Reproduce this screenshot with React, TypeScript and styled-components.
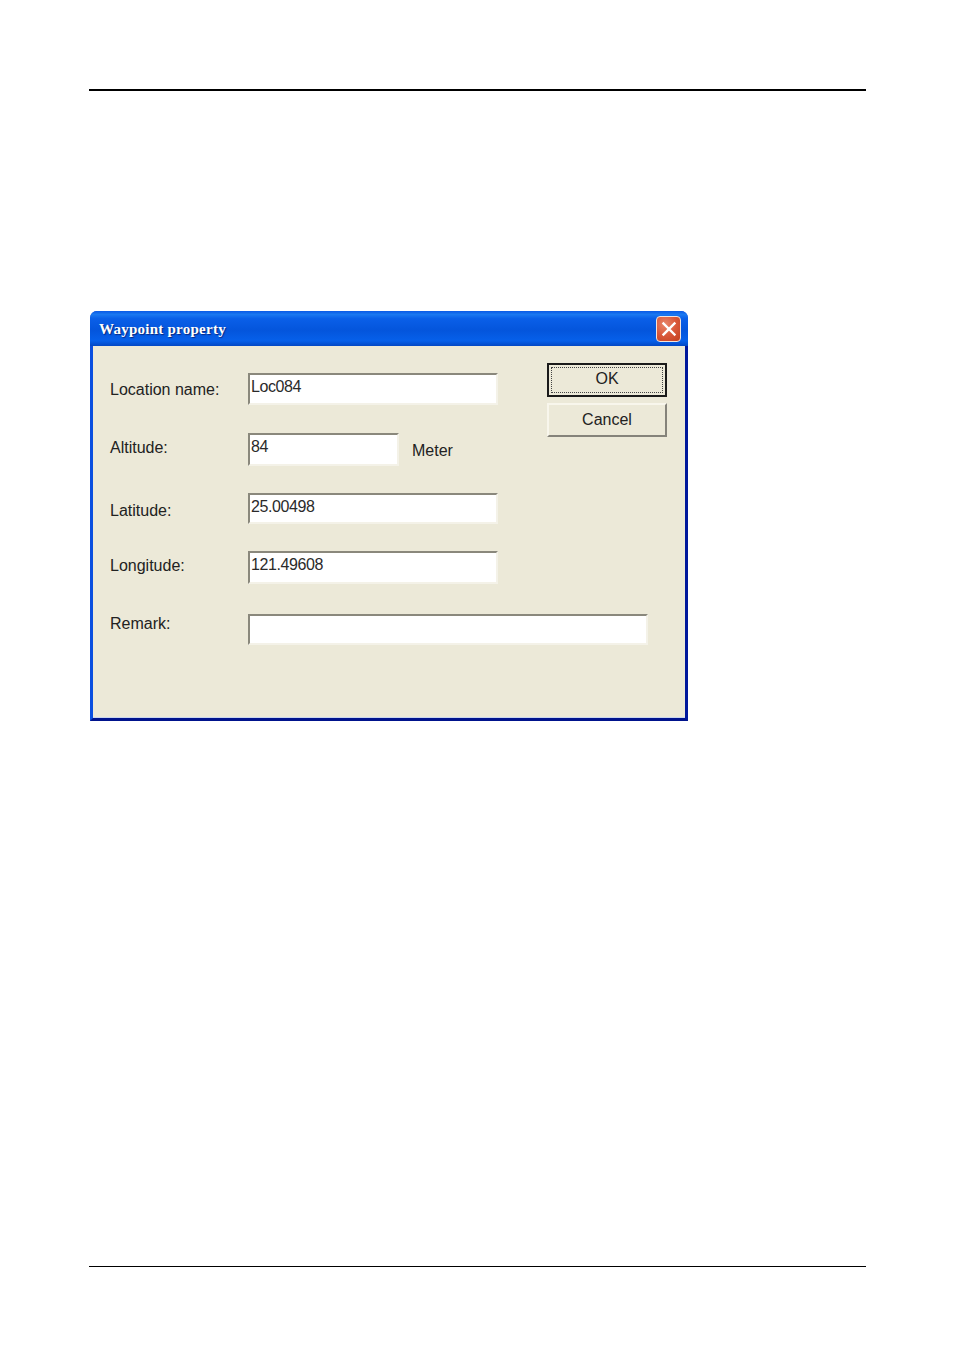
import React from 'react';
import styled, { createGlobalStyle } from 'styled-components';

const GlobalStyle = createGlobalStyle`
  html, body {
    margin: 0;
    padding: 0;
    background: #fff;
  }
`;

const fields = [
  { label: 'Location name:', value: 'Loc084', labelTop: 8, height: 32, width: 250, rowHeight: 60 },
  { label: 'Altitude:', value: '84', labelTop: 6, height: 33, width: 151, rowHeight: 60, unit: 'Meter' },
  { label: 'Latitude:', value: '25.00498', labelTop: 9, height: 31, width: 250, rowHeight: 58 },
  { label: 'Longitude:', value: '121.49608', labelTop: 6, height: 33, width: 250, rowHeight: 63 },
  { label: 'Remark:', value: '', labelTop: 1, height: 31, width: 400, rowHeight: 31 },
];

const App: React.FC = () => {
  return (
    <Page>
      <GlobalStyle />
      <TopRule />
      <Dialog>
        <TitleBar>
          <Title>Waypoint property</Title>
          <CloseButton aria-label='Close'>
            <svg width='16' height='16' viewBox='0 0 16 16'>
              <path d='M2.5 2.5 L13.5 13.5 M13.5 2.5 L2.5 13.5' stroke='#fff' strokeWidth='2.4' strokeLinecap='square' />
            </svg>
          </CloseButton>
        </TitleBar>
        <Body>
          <Form>
            {fields.map((field) => (
              <Row key={field.label} $height={field.rowHeight}>
                <Label $top={field.labelTop}>{field.label}</Label>
                <Field $width={field.width} $height={field.height}>
                  {field.value}
                </Field>
                {field.unit && <Unit>{field.unit}</Unit>}
              </Row>
            ))}
          </Form>
          <Buttons>
            <DefaultButton>
              <FocusRing>OK</FocusRing>
            </DefaultButton>
            <Button>Cancel</Button>
          </Buttons>
        </Body>
      </Dialog>
      <BottomRule />
    </Page>
  );
};

export default App;

const Page = styled.div`
  width: 954px;
  height: 1351px;
  padding: 89px 88px 0 89px;
  box-sizing: border-box;
  overflow: hidden;
`;

const TopRule = styled.div`
  height: 2px;
  background: #000;
`;

const BottomRule = styled.div`
  height: 1px;
  margin-top: 545px;
  background: #000;
`;

const Dialog = styled.div`
  width: 598px;
  height: 410px;
  margin: 220px 0 0 1px;
  display: flex;
  flex-direction: column;
  border-radius: 7px 7px 0 0;
  overflow: hidden;
  background: #0a3fd8;
`;

const TitleBar = styled.div`
  height: 35px;
  flex: none;
  display: flex;
  align-items: center;
  justify-content: space-between;
  padding: 0 6px 0 9px;
  background: linear-gradient(
    to bottom,
    #0a5ae6 0%,
    #1a78f0 10%,
    #0a5fe8 22%,
    #0455dc 55%,
    #0660ea 85%,
    #0348c4 100%
  );
`;

const Title = styled.div`
  padding-top: 2px;
  font-family: 'Liberation Serif', serif;
  font-size: 15px;
  font-weight: 700;
  letter-spacing: 0.25px;
  color: #fff;
  text-shadow: 1px 1px 1px #0a2a80;
`;

const CloseButton = styled.div`
  width: 25px;
  height: 26px;
  margin-right: 1px;
  box-sizing: border-box;
  display: flex;
  align-items: center;
  justify-content: center;
  border: 1px solid #f2e4dc;
  border-radius: 4px;
  background: radial-gradient(circle at 35% 30%, #e8866a 0%, #d9583a 50%, #c2401f 100%);
`;

const Body = styled.div`
  flex: 1;
  display: flex;
  align-items: flex-start;
  padding: 27px 0 0 17px;
  background: #ece9d8;
  border-style: solid;
  border-width: 0 3px 3px 3px;
  border-color: #0a3fd8 #00189c #00138c #0a4fe0;
  box-shadow: inset 0 -1px 0 #c9d6ee;
`;

const Form = styled.div`
  width: 437px;
  flex: none;
  display: flex;
  flex-direction: column;
`;

const Row = styled.div<{ $height: number }>`
  height: ${(props) => props.$height}px;
  display: flex;
  align-items: flex-start;
`;

const Label = styled.div<{ $top: number }>`
  width: 138px;
  flex: none;
  padding-top: ${(props) => props.$top}px;
  font-family: 'Liberation Sans', Arial, sans-serif;
  font-size: 16px;
  line-height: 18px;
  color: #222;
`;

const Field = styled.div<{ $width: number; $height: number }>`
  width: ${(props) => props.$width}px;
  height: ${(props) => props.$height}px;
  flex: none;
  box-sizing: border-box;
  padding: 3px 0 0 1px;
  background: #fff;
  border-style: solid;
  border-width: 2px;
  border-color: #8a887c #f4f2e8 #f4f2e8 #8a887c;
  font-family: 'Liberation Sans', Arial, sans-serif;
  font-size: 16px;
  letter-spacing: -0.4px;
  line-height: 18px;
  color: #2a2a2a;
`;

const Unit = styled.div`
  margin: 9px 0 0 13px;
  font-family: 'Liberation Sans', Arial, sans-serif;
  font-size: 16px;
  line-height: 18px;
  color: #222;
`;

const Buttons = styled.div`
  width: 120px;
  flex: none;
  margin-top: -10px;
  display: flex;
  flex-direction: column;
  gap: 6px;
`;

const Button = styled.div`
  height: 34px;
  box-sizing: border-box;
  display: flex;
  align-items: center;
  justify-content: center;
  border-style: solid;
  border-width: 2px;
  border-color: #f8f6ec #85837a #85837a #f8f6ec;
  font-family: 'Liberation Sans', Arial, sans-serif;
  font-size: 16px;
  color: #222;
`;

const DefaultButton = styled(Button)`
  border: 2px solid #1a1a1a;
  padding: 2px;
`;

const FocusRing = styled.div`
  width: 100%;
  height: 100%;
  box-sizing: border-box;
  display: flex;
  align-items: center;
  justify-content: center;
  border: 1px dotted #444;
  padding-bottom: 2px;
`;
